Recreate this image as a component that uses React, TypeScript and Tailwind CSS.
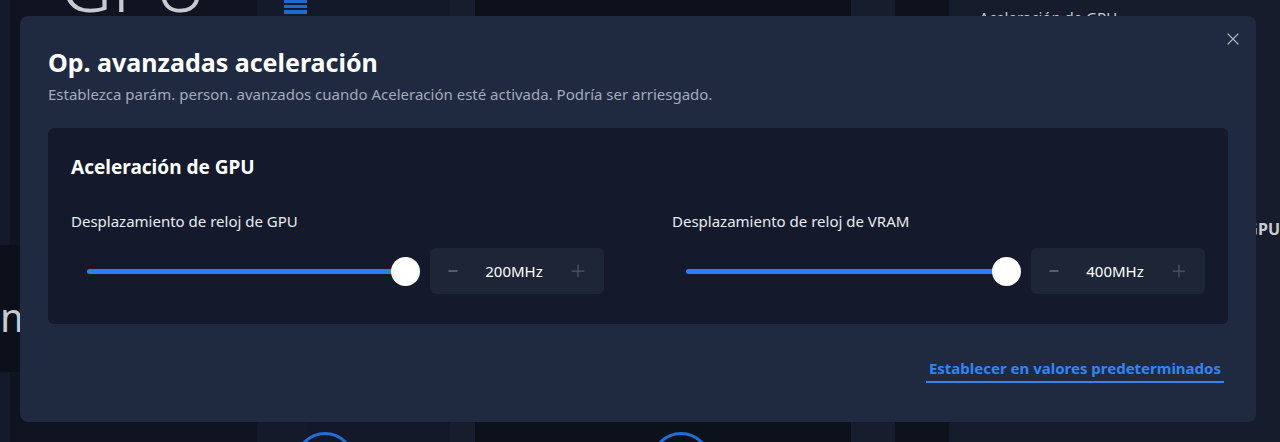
import { X, Minus, Plus } from "lucide-react"

const font = { fontFamily: '"Noto Sans", "Open Sans", sans-serif' }

function Stepper({ value }: { value: string }) {
  return (
    <div className="flex items-center justify-between w-[174px] h-[46px] rounded-md bg-[#1e2536] px-4">
      <Minus size={14} strokeWidth={2} className="text-[#8d95a6]" />
      <span className="text-[15px] text-white">{value}</span>
      <Plus size={20} strokeWidth={1.5} className="text-[#4d5567]" />
    </div>
  )
}

function SliderRow({ label, value, w, pad }: { label: string, value: string, w: string, pad: string }) {
  return (
    <div className={w}>
      <div className="text-[15px] text-[#e8ebf0] h-[20px] leading-[20px]">{label}</div>
      <div className="flex items-center mt-[17px]">
        <div className={`flex items-center w-[349px] ${pad}`}>
          <div className="h-[5px] flex-1 rounded-full bg-[#2d7ff9]" />
          <div className="w-[29px] h-[29px] rounded-full bg-white -ml-[14px]" />
        </div>
        <div className="ml-[10px]">
          <Stepper value={value} />
        </div>
      </div>
    </div>
  )
}

export default function App() {
  return (
    <div className="relative w-[1280px] h-[442px] overflow-hidden bg-[#161c2c]" style={font}>
      {/* dimmed app behind the dialog */}
      <div className="flex h-full">
        <div className="w-[10px] bg-[#141a2a]" />
        <div className="w-[250px] bg-[#0f1420] flex flex-col">
          <div className="h-[297px] pl-[50px] -mt-[52px] text-[72px] font-light text-[#c7cad0] leading-none">GPU</div>
          <div className="h-[127px] bg-[#0c101a] -ml-[10px] text-[40px] text-[#c7cad0] pt-[52px] leading-none">m</div>
        </div>
        <div className="w-[27px] bg-[#141a2a]" />
        <div className="w-[24px] bg-[#141a2a] flex flex-col gap-[2px] pt-0">
          <div className="h-[3px] bg-[#1e6ad0]" />
          <div className="h-[3px] bg-[#1e6ad0]" />
          <div className="h-[4px] bg-[#1e6ad0]" />
          <div className="h-[4px] bg-[#1e6ad0]" />
        </div>
        <div className="w-[145px] bg-[#131828]" />
        <div className="w-[25px] bg-[#171d2d]" />
        <div className="w-[380px] bg-[#0d111b]" />
        <div className="w-[45px] bg-[#171d2d]" />
        <div className="w-[55px] bg-[#0e121c]" />
        <div className="flex-1 bg-[#161c2c] pl-[30px] pt-[6px]">
          <div className="text-[15px] text-[#c9ccd2]">Aceleración de GPU</div>
          <div className="mt-[188px] ml-[267px] text-[16px] font-bold text-[#c9ccd2]">GPU</div>
        </div>
      </div>
      <div className="absolute left-[295px] top-[432px] w-[60px] h-[60px] rounded-full border-[3px] border-[#1f6fd8]" />
      <div className="absolute left-[651px] top-[432px] w-[60px] h-[60px] rounded-full border-[3px] border-[#1f6fd8]" />

      {/* dialog */}
      <div className="absolute left-[20px] top-[16px] w-[1236px] h-[406px] rounded-lg bg-[#1f2940] px-[28px] pt-[29px]">
        <button className="absolute right-[13px] top-[13px] text-[#a9b0bd]">
          <X size={20} strokeWidth={1.5} />
        </button>
        <h2 className="text-[25px] font-bold text-white leading-[34px]">Op. avanzadas aceleración</h2>
        <p className="text-[15px] text-[#a4abb8] mt-[5px] leading-[20px]">
          Establezca parám. person. avanzados cuando Aceleración esté activada. Podría ser arriesgado.
        </p>
        <div className="mt-[24px] rounded-md bg-[#141a2c] px-[23px] pt-[26px] h-[196px]">
          <div className="text-[19px] font-bold text-white leading-[26px]">Aceleración de GPU</div>
          <div className="flex mt-[31px]">
            <SliderRow label="Desplazamiento de reloj de GPU" value="200MHz" w="w-[602px]" pad="pl-[16px]" />
            <SliderRow label="Desplazamiento de reloj de VRAM" value="400MHz" w="flex-1" pad="pl-[14px]" />
          </div>
        </div>
        <div className="flex justify-end mt-[34px] pr-[4px]">
          <a className="text-[15px] font-bold text-[#2f86f0] border-b-2 border-[#2f86f0] pb-[3px] px-[3px] leading-[20px]">
            Establecer en valores predeterminados
          </a>
        </div>
      </div>
    </div>
  )
}
